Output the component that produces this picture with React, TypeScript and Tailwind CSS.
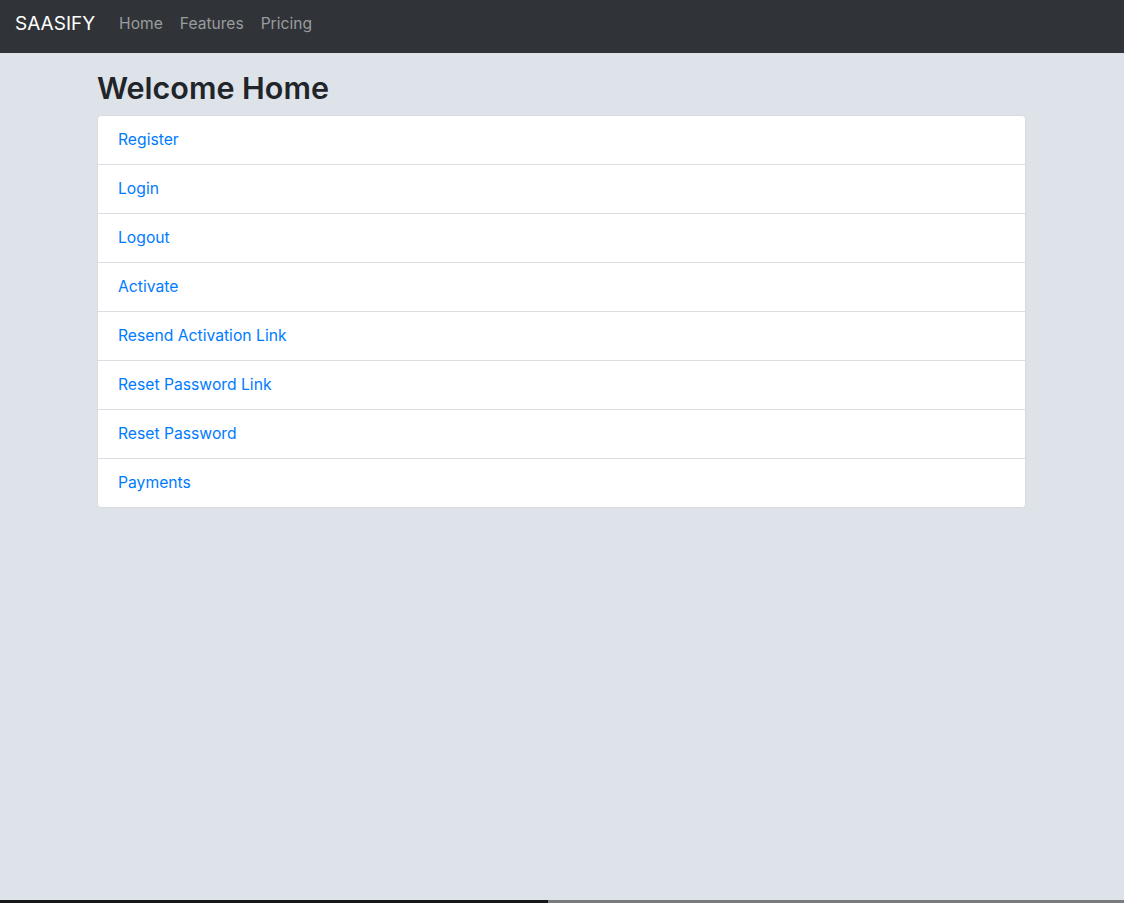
import React from "react";

const links = [
  "Register",
  "Login",
  "Logout",
  "Activate",
  "Resend Activation Link",
  "Reset Password Link",
  "Reset Password",
  "Payments",
];

export default function App() {
  return (
    <div
      className="flex h-[903px] flex-col bg-[#dee2e9]"
      style={{ fontFamily: "Inter, 'Noto Sans', sans-serif" }}
    >
      {/* Navbar */}
      <nav className="flex h-[53px] items-center bg-[#303438] pl-[15px] pb-[6px]">
        <a className="mr-[24px] text-[19px] leading-[30px] text-white">SAASIFY</a>
        <div className="flex gap-[17px] text-[15.6px] text-[#9a9c9e]">
          <a>Home</a>
          <a>Features</a>
          <a>Pricing</a>
        </div>
      </nav>

      {/* Main */}
      <main className="mx-auto w-[960px] flex-1 px-[15px]">
        <h2 className="mt-4 mb-2 text-[30.5px] leading-[38px] font-semibold text-[#212529]">
          Welcome Home
        </h2>
        <ul className="mr-px overflow-hidden rounded border border-[#d9dbde] bg-white">
          {links.map((l, i) => (
            <li
              key={l}
              className={`px-5 py-3 text-[15.7px] leading-6 text-[#007bff] ${
                i > 0 ? "border-t border-[#dcdee1]" : ""
              }`}
            >
              <a>{l}</a>
            </li>
          ))}
        </ul>
      </main>

      {/* bottom edge */}
      <div className="flex h-[3px]">
        <div className="w-[548px] bg-[#15181b]" />
        <div className="flex-1 bg-[#7a7b7d]" />
      </div>
    </div>
  );
}
